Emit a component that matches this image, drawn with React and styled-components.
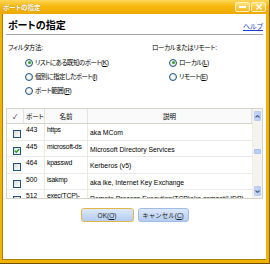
import React from "react";
import styled, { createGlobalStyle } from "styled-components";

const GlobalStyle = createGlobalStyle`
  html, body {
    margin: 0;
    padding: 0;
    background: #ffffff;
  }
  body {
    font-family: "Liberation Sans", "Noto Sans CJK JP", sans-serif;
    font-feature-settings: "palt";
  }
  * {
    box-sizing: border-box;
  }
`;

const Window = styled.div`
  width: 270px;
  height: 264px;
  display: flex;
  flex-direction: column;
  background: #f1b205;
  border-bottom: 1px solid #6e5200;
  border-right: 1px solid #8a6800;
`;

const TitleBar = styled.div`
  height: 14px;
  flex: none;
  display: flex;
  align-items: center;
  justify-content: space-between;
  padding: 0 3px 0 3px;
  background: linear-gradient(#ffd75a, #f6b80c 45%, #eda800);
`;

const TitleText = styled.span`
  color: #ffffff;
  font-size: 6.5px;
  font-weight: bold;
  text-shadow: 0 0 1px #a07000;
`;

const TitleButtons = styled.div`
  display: flex;
  gap: 1px;
`;

const TitleButton = styled.div`
  width: 15px;
  height: 10px;
  border: 1px solid #fff2c0;
  border-radius: 2px;
  background: linear-gradient(#ffe27a, #f3b822);
  display: flex;
  align-items: center;
  justify-content: center;
`;

const Frame = styled.div`
  flex: 1;
  display: flex;
  flex-direction: column;
  margin: 0 3px 3px 2px;
  background: #ffffff;
  border-left: 1px solid #a98200;
  border-bottom: 1px solid #a98200;
  padding: 0 3px 0 3px;
`;

const HeaderRow = styled.div`
  display: flex;
  justify-content: space-between;
  align-items: flex-end;
  height: 21px;
  padding: 0 0 2px 2px;
  border-bottom: 1px solid #a6a6a6;
`;

const Heading = styled.h1`
  margin: 0;
  font-size: 10px;
  line-height: 13px;
  font-weight: bold;
  color: #000000;
`;

const HelpLink = styled.a`
  font-size: 7px;
  color: #1f3fd0;
  text-decoration: underline;
  margin-bottom: 1px;
`;

const Options = styled.div`
  display: grid;
  grid-template-columns: 144px 1fr;
  padding: 8px 0 0 2px;
  height: 73px;
  flex: none;
`;

const Group = styled.div`
  display: flex;
  flex-direction: column;
`;

const GroupLabel = styled.div`
  font-size: 6.5px;
  letter-spacing: -0.3px;
  line-height: 9px;
  color: #000000;
  margin-bottom: 6px;
`;

const RadioList = styled.div`
  display: flex;
  flex-direction: column;
  gap: 5px;
  padding-left: 17px;
`;

const RadioRow = styled.label`
  display: flex;
  align-items: center;
  gap: 2px;
  font-size: 6.5px;
  letter-spacing: -0.45px;
  line-height: 9px;
  color: #000000;
  white-space: nowrap;
`;

const RadioDot = styled.span`
  width: 8px;
  height: 8px;
  flex: none;
  border-radius: 50%;
  border: 1px solid #1c5180;
  background: radial-gradient(circle at 40% 40%, #ffffff, #dcdcd4);
  display: flex;
  align-items: center;
  justify-content: center;
  &::after {
    content: "";
    width: 3px;
    height: 3px;
    border-radius: 50%;
    background: ${(p) => (p.$on ? "#2ea82e" : "transparent")};
  }
`;

const Table = styled.div`
  height: 91px;
  flex: none;
  border: 1px solid #d5d2ca;
  display: grid;
  grid-template-columns: 1fr 10px;
  overflow: hidden;
`;

const Rows = styled.div`
  display: flex;
  flex-direction: column;
  overflow: hidden;
`;

const Row = styled.div`
  display: grid;
  grid-template-columns: 17px 21px 43px 1fr;
  height: ${(p) => (p.$head ? "15px" : "16.5px")};
  flex: none;
  border-bottom: 1px solid ${(p) => (p.$head ? "#d6d3c8" : "#ebe9e3")};
  font-size: ${(p) => (p.$head ? "6.5px" : "6.8px")};
  color: #000000;
  background: ${(p) => (p.$head ? "#fafafa" : "#ffffff")};
`;

const Cell = styled.div`
  display: flex;
  align-items: flex-start;
  padding: ${(p) => (p.$desc ? "5px 0 0 2px" : "2px 0 0 2px")};
  border-right: 1px solid ${(p) => (p.$line ? "#ebe9e3" : "transparent")};
  white-space: ${(p) => (p.$desc ? "normal" : "nowrap")};
  letter-spacing: ${(p) => (p.$tight ? "-0.2px" : "0")};
  overflow: hidden;
  line-height: 8px;
`;

const HeadCell = styled.div`
  display: flex;
  align-items: center;
  justify-content: ${(p) => (p.$center ? "center" : "flex-start")};
  padding-left: ${(p) => (p.$center ? "0" : "2px")};
  border-right: 1px solid #e4e2da;
  white-space: nowrap;
  overflow: hidden;
`;

const Check = styled.span`
  width: 8px;
  height: 8px;
  margin: 4px 0 0 4px;
  border: 1px solid #1c5180;
  background: linear-gradient(135deg, #dcdcd6, #ffffff);
  display: flex;
  align-items: center;
  justify-content: center;
`;

const ScrollBar = styled.div`
  display: flex;
  flex-direction: column;
  background: #f4f3ee;
  border-left: 1px solid #eeede6;
  padding: 2px 0;
`;

const ScrollButton = styled.div`
  height: 10px;
  margin: 0 1px;
  border-radius: 1px;
  background: linear-gradient(90deg, #c8d8fb, #b9cdf8);
  border: 1px solid #b8cbf0;
  display: flex;
  align-items: center;
  justify-content: center;
`;

const Track = styled.div`
  flex: 1;
  display: flex;
  flex-direction: column;
  padding-top: 28px;
`;

const Thumb = styled.div`
  height: 5px;
  margin: 0 1px;
  border-radius: 1px;
  background: #bccff6;
  border: 1px solid #a9bfee;
`;

const ButtonRow = styled.div`
  display: flex;
  justify-content: center;
  gap: 4px;
  padding: 9px 0 0 0;
`;

const Button = styled.button`
  width: ${(p) => p.$w}px;
  height: 14px;
  border-radius: 3px;
  border: 1px solid ${(p) => (p.$def ? "#e3b54a" : "#9fbbe6")};
  background: linear-gradient(#dbe8fb, #b5cdf2);
  font-family: "Liberation Sans", "Noto Sans CJK JP", sans-serif;
  font-size: 6.5px;
  color: #1a1a1a;
  padding: 0;
  display: flex;
  align-items: center;
  justify-content: center;
`;

const Radio = ({ on, children }) => (
  <RadioRow>
    <RadioDot $on={on} />
    <span>{children}</span>
  </RadioRow>
);

const ports = [
  { port: "443", name: "https", desc: "aka MCom", on: false },
  { port: "445", name: "microsoft-ds", desc: "Microsoft Directory Services", on: true },
  { port: "464", name: "kpasswd", desc: "Kerberos (v5)", on: false },
  { port: "500", name: "isakmp", desc: "aka ike, Internet Key Exchange", on: false },
  { port: "512", name: "exec(TCP)-", desc: "Remote Process Execution(TCP)aka comsat(UDP)", on: false },
];

const App = () => {
  return (
    <Window>
      <GlobalStyle />
      <TitleBar>
        <TitleText>ポートの指定</TitleText>
        <TitleButtons>
          <TitleButton>
            <svg width="7" height="3" viewBox="0 0 7 3">
              <rect x="0" y="0" width="7" height="2" fill="#ffffff" />
            </svg>
          </TitleButton>
          <TitleButton>
            <svg width="6" height="6" viewBox="0 0 6 6">
              <path d="M0.5 0.5 L5.5 5.5 M5.5 0.5 L0.5 5.5" stroke="#ffffff" strokeWidth="1.4" />
            </svg>
          </TitleButton>
        </TitleButtons>
      </TitleBar>
      <Frame>
        <HeaderRow>
          <Heading>ポートの指定</Heading>
          <HelpLink>ヘルプ</HelpLink>
        </HeaderRow>
        <Options>
          <Group>
            <GroupLabel>フィルタ方法:</GroupLabel>
            <RadioList>
              <Radio on>リストにある既知のポート(<u>K</u>)</Radio>
              <Radio>個別に指定したポート(<u>I</u>)</Radio>
              <Radio>ポート範囲(<u>R</u>)</Radio>
            </RadioList>
          </Group>
          <Group>
            <GroupLabel>ローカルまたはリモート:</GroupLabel>
            <RadioList>
              <Radio on>ローカル(<u>L</u>)</Radio>
              <Radio>リモート(<u>E</u>)</Radio>
            </RadioList>
          </Group>
        </Options>
        <Table>
          <Rows>
            <Row $head>
              <HeadCell $center>✓</HeadCell>
              <HeadCell>ポート</HeadCell>
              <HeadCell $center>名前</HeadCell>
              <HeadCell $center>説明</HeadCell>
            </Row>
            {ports.map((r) => (
              <Row key={r.port}>
                <Cell>
                  <Check>
                    {r.on && (
                      <svg width="6" height="6" viewBox="0 0 6 6">
                        <path d="M0.8 2.8 L2.3 4.3 L5.2 1.2" fill="none" stroke="#21a121" strokeWidth="1.3" />
                      </svg>
                    )}
                  </Check>
                </Cell>
                <Cell $line>{r.port}</Cell>
                <Cell $line $tight>{r.name}</Cell>
                <Cell $desc>{r.desc}</Cell>
              </Row>
            ))}
          </Rows>
          <ScrollBar>
            <ScrollButton>
              <svg width="5" height="3" viewBox="0 0 5 3">
                <path d="M0.5 2.5 L2.5 0.5 L4.5 2.5" fill="none" stroke="#4d6185" strokeWidth="1.1" />
              </svg>
            </ScrollButton>
            <Track>
              <Thumb />
            </Track>
            <ScrollButton>
              <svg width="5" height="3" viewBox="0 0 5 3">
                <path d="M0.5 0.5 L2.5 2.5 L4.5 0.5" fill="none" stroke="#4d6185" strokeWidth="1.1" />
              </svg>
            </ScrollButton>
          </ScrollBar>
        </Table>
        <ButtonRow>
          <Button $w={53} $def>OK(<u>O</u>)</Button>
          <Button $w={51}>キャンセル(<u>C</u>)</Button>
        </ButtonRow>
      </Frame>
    </Window>
  );
};

export default App;
